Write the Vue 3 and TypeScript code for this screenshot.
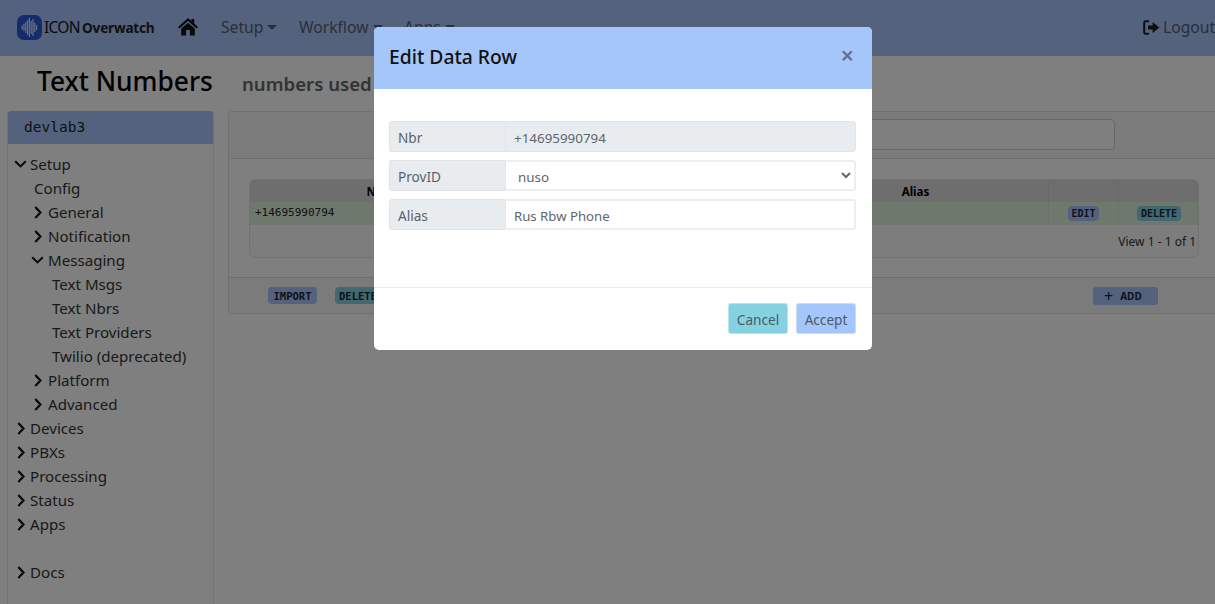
<script setup lang="ts">
interface TreeItem {
  label: string
  level: number
  icon: 'down' | 'right' | 'none'
  gap?: boolean
}

const items: TreeItem[] = [
  { label: 'Setup', level: 0, icon: 'down' },
  { label: 'Config', level: 1, icon: 'none' },
  { label: 'General', level: 1, icon: 'right' },
  { label: 'Notification', level: 1, icon: 'right' },
  { label: 'Messaging', level: 1, icon: 'down' },
  { label: 'Text Msgs', level: 2, icon: 'none' },
  { label: 'Text Nbrs', level: 2, icon: 'none' },
  { label: 'Text Providers', level: 2, icon: 'none' },
  { label: 'Twilio (deprecated)', level: 2, icon: 'none' },
  { label: 'Platform', level: 1, icon: 'right' },
  { label: 'Advanced', level: 1, icon: 'right' },
  { label: 'Devices', level: 0, icon: 'right' },
  { label: 'PBXs', level: 0, icon: 'right' },
  { label: 'Processing', level: 0, icon: 'right' },
  { label: 'Status', level: 0, icon: 'right' },
  { label: 'Apps', level: 0, icon: 'right' },
  { label: 'Docs', level: 0, icon: 'right', gap: true },
]

const bars = [4, 7, 11, 15, 19, 13, 17, 9, 5]
</script>

<template>
  <div class="page">
    <header class="nav">
      <div class="brand">
        <span class="logo">
          <svg width="25" height="25" viewBox="0 0 25 25">
            <rect width="25" height="25" rx="7" fill="#2a56d8" />
            <rect
              v-for="(b, i) in bars"
              :key="i"
              :x="4.6 + i * 1.8"
              :y="12.5 - b / 2"
              width="1.2"
              :height="b"
              fill="#d9e4fb"
            />
          </svg>
        </span>
        <span class="icon-word">ICON</span>
        <span class="over-word">Overwatch</span>
      </div>
      <svg class="home" width="20" height="18" viewBox="0 0 20 18">
        <path d="M10 0 L13.5 3.1 V1 H16.2 V5.5 L20 9 L18.6 10.4 L10 2.9 L1.4 10.4 L0 9 Z M3.2 10.6 L10 4.7 L16.8 10.6 V17.6 H11.9 V12 H8.1 V17.6 H3.2 Z" fill="#111" />
      </svg>
      <a class="link setup">Setup<i class="caret"></i></a>
      <a class="link workflow">Workflow<i class="caret"></i></a>
      <a class="link apps">Apps<i class="caret"></i></a>
      <a class="logout">
        <svg width="17" height="15" viewBox="0 0 17 15">
          <path d="M6 1.2 H2.6 Q1.2 1.2 1.2 2.6 V12.4 Q1.2 13.8 2.6 13.8 H6" fill="none" stroke="#1c1c1c" stroke-width="2" />
          <path d="M5 5.4 H9.6 V2 L16.4 7.5 L9.6 13 V9.6 H5 Z" fill="#1c1c1c" />
        </svg>
        <span>Logout</span>
      </a>
    </header>

    <div class="title-row">
      <h3 class="title">Text Numbers</h3>
      <h5 class="subtitle">numbers used for sending text messages</h5>
    </div>

    <div class="content">
      <aside class="side">
        <div class="side-head">devlab3</div>
        <ul class="tree">
          <li
            v-for="item in items"
            :key="item.label"
            class="tree-item"
            :class="[`lvl-${item.level}`, { 'has-icon': item.icon !== 'none', gap: item.gap }]"
          >
            <svg v-if="item.icon === 'down'" class="chev-down" width="13" height="8" viewBox="0 0 13 8">
              <path d="M1.2 1.2 L6.5 6.4 L11.8 1.2" fill="none" stroke="#141414" stroke-width="2.1" />
            </svg>
            <svg v-if="item.icon === 'right'" class="chev-right" width="8" height="13" viewBox="0 0 8 13">
              <path d="M1.3 1 L6.5 6.5 L1.3 12" fill="none" stroke="#141414" stroke-width="2.3" />
            </svg>
            <span>{{ item.label }}</span>
          </li>
        </ul>
      </aside>

      <main class="card">
        <div class="card-head">
          <div class="search"></div>
        </div>
        <div class="card-body">
          <div class="grid">
            <div class="g-row g-head">
              <div class="cell center">Nbr</div>
              <div class="cell center">ProvID</div>
              <div class="cell center">Alias</div>
              <div class="cell"></div>
              <div class="cell"></div>
            </div>
            <div class="g-row g-data">
              <div class="cell mono-cell">+14695990794</div>
              <div class="cell mono-cell">nuso</div>
              <div class="cell alias-cell">Rus Rbw Phone</div>
              <div class="cell center"><span class="mini blue">EDIT</span></div>
              <div class="cell center"><span class="mini teal">DELETE</span></div>
            </div>
            <div class="g-foot">View 1 - 1 of 1</div>
          </div>
        </div>
        <div class="card-foot">
          <span class="foot-btn blue import">IMPORT</span>
          <span class="foot-btn teal delete">DELETE ALL</span>
          <span class="add"><b class="plus">+</b>ADD</span>
        </div>
      </main>
    </div>

    <div class="overlay"></div>

    <section class="modal">
      <div class="modal-head">
        <h5 class="modal-title">Edit Data Row</h5>
        <span class="close">×</span>
      </div>
      <div class="modal-body">
        <div class="group">
          <label class="addon">Nbr</label>
          <input class="control" value="+14695990794" disabled />
        </div>
        <div class="group">
          <label class="addon">ProvID</label>
          <select class="control select">
            <option>nuso</option>
          </select>
        </div>
        <div class="group">
          <label class="addon">Alias</label>
          <input class="control alias-input" value="Rus Rbw Phone" />
        </div>
      </div>
      <div class="modal-foot">
        <button class="btn btn-cancel">Cancel</button>
        <button class="btn btn-accept">Accept</button>
      </div>
    </section>
  </div>
</template>

<style>
html,
body {
  margin: 0;
  overflow: hidden;
  background: #fff;
}
</style>

<style scoped>
.page {
  position: relative;
  width: 1215px;
  height: 604px;
  overflow: hidden;
  font-family: "Noto Sans", "Open Sans", sans-serif;
  font-size: 15px;
  color: #212529;
  background: #fff;
}
.nav {
  height: 56px;
  background: #a8c4fc;
  display: flex;
  align-items: center;
  box-sizing: border-box;
  padding: 0 0 2px 17px;
  position: relative;
}
.brand {
  display: flex;
  align-items: center;
  width: 161px;
}
.logo {
  display: flex;
  width: 27px;
}
.icon-word {
  font-size: 15.5px;
  font-weight: 400;
  letter-spacing: -0.7px;
  color: #111;
  width: 38px;
}
.over-word {
  font-size: 13.7px;
  font-weight: 700;
  letter-spacing: -0.25px;
  color: #222;
}
.home {
  flex: none;
}
.link {
  color: #56606f;
  font-size: 15.7px;
  display: flex;
  align-items: center;
}
.setup {
  margin-left: 23px;
  width: 78px;
}
.workflow {
  width: 105px;
}
.caret {
  display: inline-block;
  margin-left: 4px;
  border-top: 5px solid currentColor;
  border-left: 5px solid transparent;
  border-right: 5px solid transparent;
}
.logout {
  margin-left: auto;
  display: flex;
  align-items: center;
  gap: 3px;
  color: #56606f;
  font-size: 15.7px;
  margin-right: -2px;
  width: 74px;
  flex: none;
}
.title-row {
  height: 55px;
  box-sizing: border-box;
  padding: 0 0 5px 37px;
  display: flex;
  align-items: center;
  white-space: nowrap;
}
.title {
  margin: 0;
  font-size: 26.3px;
  font-weight: 500;
  color: #000;
  width: 205px;
}
.subtitle {
  margin: 5px 0 0;
  font-size: 18.6px;
  font-weight: 600;
  color: #666;
}
.content {
  display: flex;
  align-items: flex-start;
  padding-left: 7px;
  height: 493px;
}
.side {
  width: 207px;
  height: 493px;
  box-sizing: border-box;
  border-left: 1px solid #e6e6e6;
  border-right: 1px solid #e6e6e6;
  flex: none;
}
.side-head {
  height: 33px;
  background: #a8c4fc;
  border-radius: 3px 3px 0 0;
  font-family: "DejaVu Sans Mono", monospace;
  font-size: 14.5px;
  line-height: 33px;
  padding-left: 16px;
  color: #212529;
}
.tree {
  list-style: none;
  margin: 8px 0 0;
  padding: 0;
}
.tree-item {
  height: 24px;
  line-height: 24px;
  font-size: 15.1px;
  display: flex;
  align-items: center;
  white-space: nowrap;
  color: #333;
}
.gap {
  margin-top: 24px;
}
.lvl-0 {
  padding-left: 22px;
}
.lvl-1 {
  padding-left: 26px;
}
.lvl-2 {
  padding-left: 44px;
}
.lvl-0.has-icon {
  padding-left: 6px;
}
.lvl-1.has-icon {
  padding-left: 23px;
}
.chev-down {
  width: 13px;
  margin-right: 3px;
}
.lvl-1 .chev-down {
  margin-right: 4px;
}
.chev-right {
  margin: 0 5px 0 3px;
}
.lvl-1 .chev-right {
  margin-right: 6px;
}
.card {
  margin-left: 14px;
  width: 1000px;
  height: 203px;
  box-sizing: border-box;
  border: 1px solid #e0e0e0;
  border-right: none;
  border-radius: 4px 0 0 4px;
  flex: none;
  display: flex;
  flex-direction: column;
}
.card-head {
  height: 46px;
  flex: none;
  background: #f7f7f7;
  border-bottom: 1px solid #dcdcdc;
  box-sizing: content-box;
  position: relative;
}
.search {
  position: absolute;
  top: 7px;
  left: 200px;
  width: 686px;
  height: 31px;
  background: #fff;
  border: 1px solid #d0d0d0;
  border-radius: 4px;
  box-sizing: border-box;
}
.card-body {
  flex: 1;
  padding: 20px 15px 0 20px;
  background: #fff;
}
.grid {
  width: 950px;
  height: 79px;
  box-sizing: border-box;
  border: 1px solid #e4e4e4;
  border-radius: 6px;
  overflow: hidden;
  font-size: 11.6px;
  background: #fafafa;
}
.g-row {
  display: grid;
  grid-template-columns: 256px 277px 266px 70px 1fr;
}
.g-head {
  height: 22px;
  background: #dcdcdc;
  font-weight: 700;
  color: #000;
  line-height: 24px;
}
.g-data {
  height: 23px;
  background: #dff0d8;
  line-height: 22px;
}
.cell {
  border-right: 1px solid rgba(0, 0, 0, 0.04);
  padding: 0 5px;
  white-space: nowrap;
  overflow: hidden;
}
.center {
  text-align: center;
}
.mono-cell {
  font-family: "DejaVu Sans Mono", monospace;
  font-size: 11px;
}
.alias-cell {
  font-size: 10.5px;
}
.g-foot {
  text-align: right;
  padding: 8px 2px 0 0;
  font-size: 12px;
  color: #333;
}
.mini {
  display: inline-block;
  font-family: "DejaVu Sans Mono", monospace;
  font-size: 10px;
  font-weight: 700;
  line-height: 15px;
  height: 15px;
  padding: 0 3.5px;
  border-radius: 4px;
  vertical-align: top;
  margin-top: 4px;
  color: #1a2738;
}
.teal.mini {
  margin-left: 2px;
}
.blue {
  background: #a8c4fc;
}
.teal {
  background: #84d2df;
}
.card-foot {
  height: 35px;
  flex: none;
  background: #f7f7f7;
  border-top: 1px solid #dcdcdc;
  box-sizing: content-box;
  display: flex;
  align-items: center;
}
.foot-btn {
  font-family: "DejaVu Sans Mono", monospace;
  font-size: 10.5px;
  font-weight: 700;
  height: 17px;
  line-height: 18px;
  border-radius: 4px;
  text-align: center;
  color: #1a2738;
  flex: none;
}
.import {
  margin-left: 39px;
  width: 49px;
}
.delete {
  margin-left: 18px;
  width: 90px;
  box-sizing: border-box;
  padding-left: 4px;
  text-align: left;
}
.add {
  margin-left: 668px;
  width: 65px;
  height: 18px;
  box-sizing: border-box;
  padding-left: 11px;
  background: #a8c4fc;
  border-radius: 3px;
  font-size: 10px;
  font-weight: 700;
  line-height: 18px;
  color: #1a2738;
  display: flex;
  align-items: center;
}
.plus {
  font-size: 16px;
  font-weight: 400;
  margin-right: 7px;
}
.overlay {
  position: absolute;
  inset: 0;
  background: rgba(0, 0, 0, 0.5);
}
.modal {
  position: absolute;
  left: 374px;
  top: 27px;
  width: 498px;
  height: 323px;
  background: #fff;
  border-radius: 5px;
  overflow: hidden;
  display: flex;
  flex-direction: column;
}
.modal-head {
  height: 62px;
  flex: none;
  box-sizing: border-box;
  background: #a4c6fb;
  display: flex;
  align-items: center;
  justify-content: space-between;
  padding: 0 18px 3px 15px;
}
.modal-title {
  margin: 0;
  font-size: 19.3px;
  font-weight: 500;
  color: #111;
}
.close {
  font-size: 23px;
  font-weight: 600;
  color: #5f708c;
  margin-top: -3px;
}
.modal-body {
  flex: 1;
  padding: 32px 16px 0 15px;
  display: flex;
  flex-direction: column;
  gap: 8px;
}
.group {
  display: flex;
  height: 31px;
}
.addon {
  width: 116px;
  flex: none;
  box-sizing: border-box;
  padding-left: 8px;
  line-height: 31px;
  font-size: 13.6px;
  color: #5a6269;
  background: #e9ecef;
  border: 1px solid #e2e5e8;
  border-right: none;
  border-radius: 3px 0 0 3px;
}
.control {
  flex: 1;
  min-width: 0;
  box-sizing: border-box;
  height: 31px;
  padding: 2px 7px 0;
  font-family: inherit;
  font-size: 13.4px;
  color: #5f666d;
  background: #fff;
  border: 2px solid #eceef0;
  border-left: 1px solid #e2e5e8;
  border-radius: 0 3px 3px 0;
  outline: none;
}
.alias-input {
  padding-left: 8px;
  font-size: 13.2px;
}
.control:disabled {
  background: #e9ecef;
  border-color: #e2e5e8;
  border-width: 1px;
  padding-left: 8px;
  opacity: 1;
}
.select {
  padding: 2px 7px 0 8px;
}
.modal-foot {
  height: 63px;
  flex: none;
  box-sizing: border-box;
  border-top: 1px solid #e9ecef;
  display: flex;
  justify-content: flex-end;
  align-items: flex-start;
  gap: 8px;
  padding: 15px 16px 0 0;
}
.btn {
  height: 31px;
  border: 1px solid rgba(255, 255, 255, 0.4);
  border-radius: 3px;
  font-family: inherit;
  font-size: 13.6px;
  color: #4a5a68;
  padding: 2px 0 0;
}
.btn-cancel {
  width: 60px;
  background: #84d2df;
}
.btn-accept {
  width: 60px;
  background: #a4c6fb;
}
</style>
